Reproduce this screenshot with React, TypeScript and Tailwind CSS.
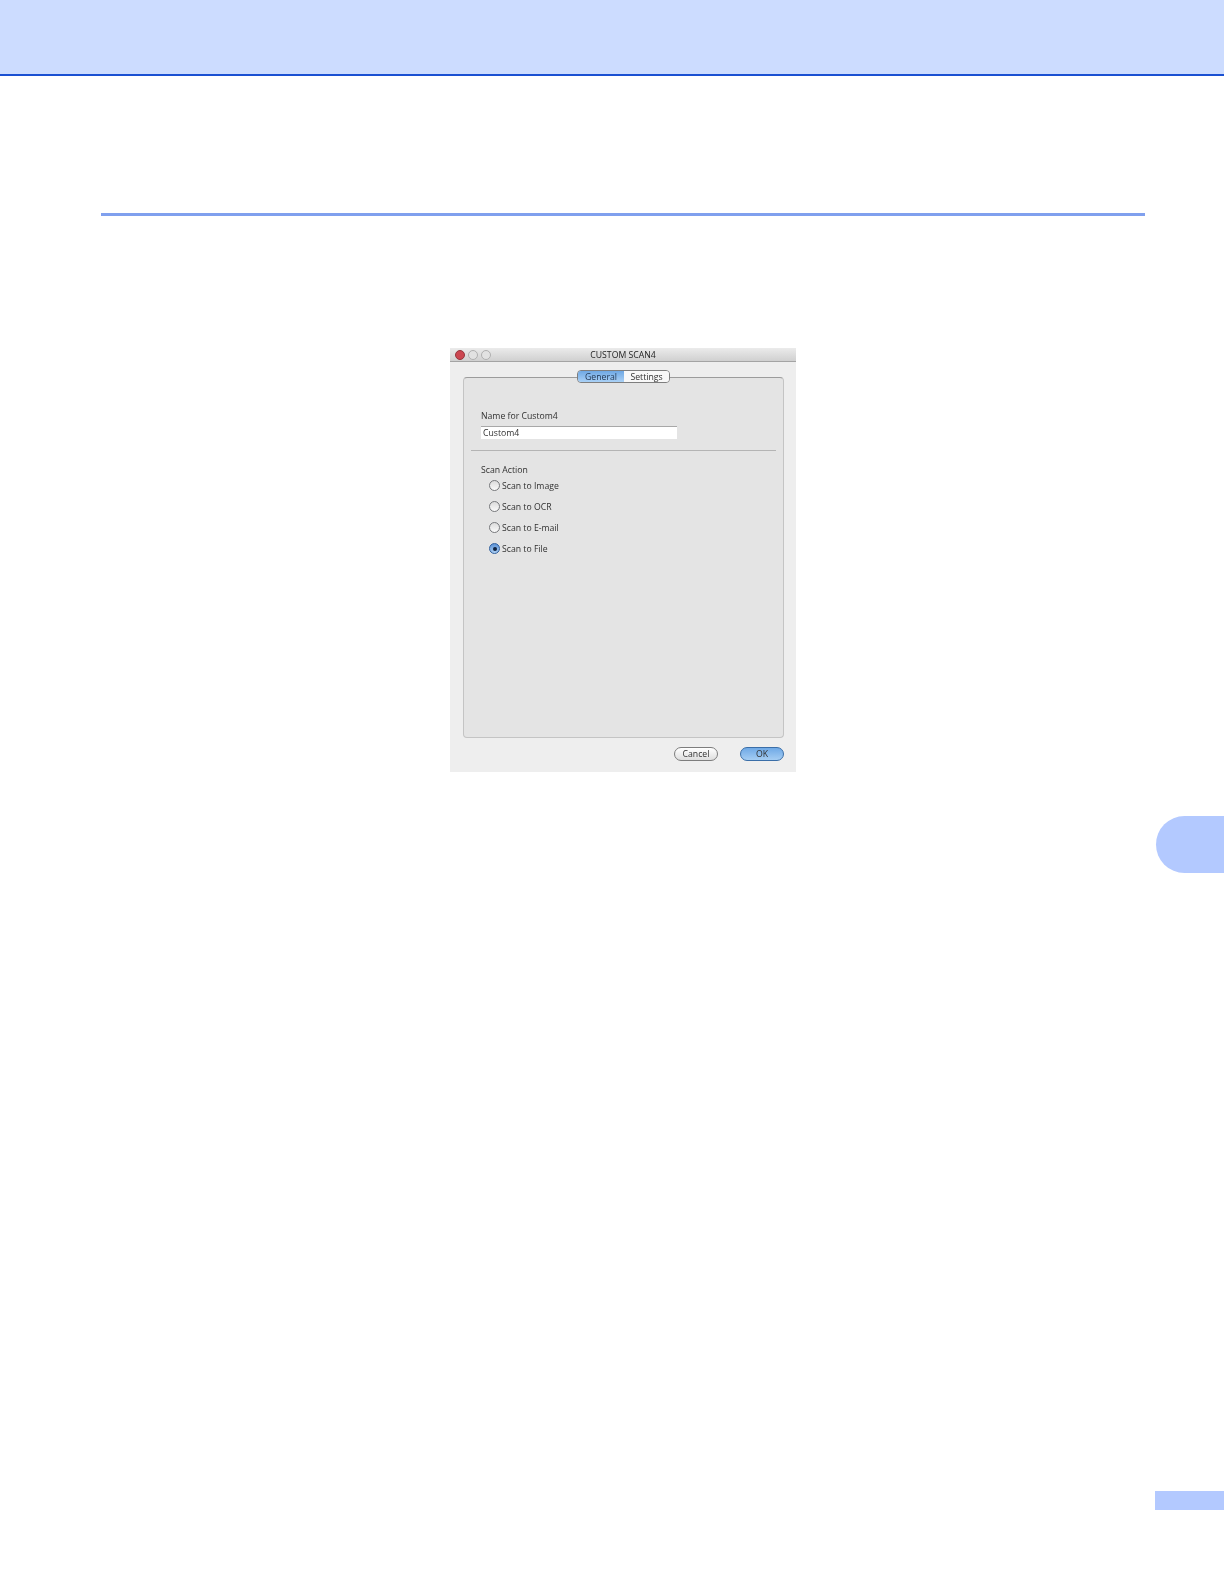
const scanOptions = ["Scan to Image", "Scan to OCR", "Scan to E-mail", "Scan to File"];

function Radio({ checked }: { checked: boolean }) {
  if (checked) {
    return (
      <span className="w-[11px] h-[11px] shrink-0 rounded-full border border-[#2f5f9e] bg-gradient-to-b from-[#5d93d6] to-[#a9cdf2] flex items-center justify-center">
        <span className="w-[4px] h-[4px] rounded-full bg-[#10233f]" />
      </span>
    );
  }
  return (
    <span className="w-[11px] h-[11px] shrink-0 rounded-full border border-[#77797c] bg-gradient-to-b from-[#dcdcdc] to-[#fafafa]" />
  );
}

function ScanWindow() {
  return (
    <div
      className="ml-[450px] mt-[132px] w-[346px] h-[424px] bg-[#eeeeee] text-[#303030] text-[8.7px] leading-[12px] blur-[0.4px]"
      style={{ fontFamily: '"Open Sans", sans-serif' }}
    >
      <div className="h-[14px] flex items-center relative bg-gradient-to-b from-[#ebebeb] to-[#d0d0d0] border-b border-[#a4a4a4]">
        <div className="flex items-center gap-[3px] pl-[5px]">
          <span className="w-[10px] h-[10px] rounded-full bg-[#cc4650] border border-[#96363e]" />
          <span className="w-[10px] h-[10px] rounded-full bg-[#e2e2e2] border border-[#b0b0b0]" />
          <span className="w-[10px] h-[10px] rounded-full bg-[#e2e2e2] border border-[#b0b0b0]" />
        </div>
        <span className="absolute inset-x-0 text-center text-[#222222]">CUSTOM SCAN4</span>
      </div>

      <div className="ml-[13px] mt-[15px] w-[321px] h-[361px] rounded-[4px] border border-[#c4c4c4] border-t-[#9c9c9c] bg-[#e4e4e4]">
        <div className="-mt-[8px] flex justify-center">
          <div className="flex h-[13px] w-[93px] rounded-[4px] border border-[#7e7e7e] overflow-hidden">
            <span className="w-[46px] text-center leading-[12px] text-[#1d3350] bg-gradient-to-b from-[#6fa8e4] to-[#a9d0f5]">General</span>
            <span className="flex-1 text-center leading-[12px] bg-[#f8f8f8]">Settings</span>
          </div>
        </div>

        <div className="mt-[27px] ml-[17px]">Name for Custom4</div>
        <div className="mt-[4px] ml-[17px] w-[196px] h-[13px] bg-white border-t border-[#a8a8a8] pl-[2px] leading-[12px]">Custom4</div>

        <div className="mt-[11px] ml-[7px] w-[305px] h-[1px] bg-[#b4b4b4]" />

        <div className="mt-[13px] ml-[17px]">Scan Action</div>
        <div className="mt-[4px] flex flex-col gap-[9px]">
          {scanOptions.map((label) => (
            <div key={label} className="flex items-start gap-[2px] pl-[25px] h-[12px]">
              <Radio checked={label === "Scan to File"} />
              <span>{label}</span>
            </div>
          ))}
        </div>
      </div>

      <div className="mt-[9px] pr-[12px] flex justify-end gap-[22px]">
        <button className="w-[44px] h-[14px] rounded-full border border-[#7d7d7d] bg-gradient-to-b from-[#ffffff] to-[#dedede] leading-[12px]">Cancel</button>
        <button className="w-[44px] h-[14px] rounded-full border border-[#3a6ea8] bg-gradient-to-b from-[#6fa9e6] to-[#a5cdf3] leading-[12px]">OK</button>
      </div>
    </div>
  );
}

export default function App() {
  return (
    <div className="w-[1224px] h-[1584px] bg-white flex flex-col overflow-hidden">
      <div className="h-[76px] shrink-0 bg-[#ccdcff] border-b-2 border-[#1a50d2]" />

      <div className="mt-[137px] ml-[101px] w-[1044px] h-[3px] bg-[#80a0ee]" />

      <ScanWindow />

      <div className="self-end mt-[44px] w-[68px] h-[57px] rounded-l-full bg-[#b3c9ff]" />
      <div className="self-end mt-[618px] w-[69px] h-[19px] bg-[#b3c9ff]" />
    </div>
  );
}
